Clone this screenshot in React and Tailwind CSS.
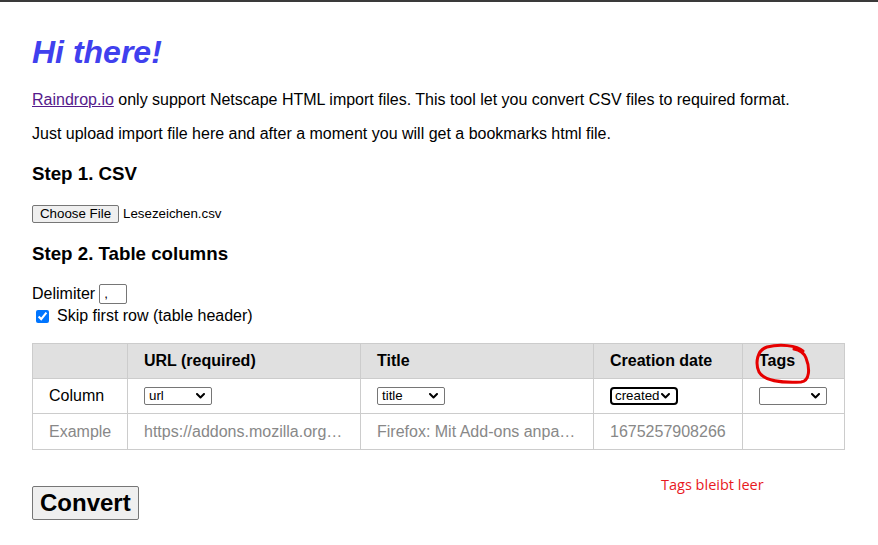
import React from "react";

function Chevron() {
  return (
    <svg width="9" height="6" viewBox="0 0 9 6" className="absolute right-[6px] top-1/2 -translate-y-1/2 pointer-events-none">
      <polyline points="1,1 4.5,4.5 8,1" fill="none" stroke="#000" strokeWidth="2" strokeLinecap="round" strokeLinejoin="round" />
    </svg>
  );
}

function Select({ value, focused }) {
  return (
    <div
      className={
        focused
          ? "relative w-[68px] h-[18px] border-2 border-black rounded-[4px] bg-white flex items-center"
          : "relative w-[68px] h-[18px] border border-[#767676] rounded-[2px] bg-white flex items-center"
      }
    >
      <span className={focused ? "text-[13.33px] leading-[14px] pl-[3px] text-black" : "text-[13.33px] leading-[14px] pl-[4px] text-black"}>{value}</span>
      <Chevron />
    </div>
  );
}

export default function App() {
  return (
    <div className="relative min-h-[545px] bg-white text-black" style={{ fontFamily: '"Liberation Sans", Arial, sans-serif' }}>
      <div className="h-[2px] bg-[#3a3a3a]" />
      <main className="px-[32px]">
        <h1 className="mt-[32px] text-[32px] leading-[36px] italic font-bold text-[#4040ee]">Hi there!</h1>
        <p className="mt-[21px] text-[16px] leading-[18px]">
          <a className="underline text-[#551a8b]">Raindrop.io</a> only support Netscape HTML import files. This tool let you convert CSV files to required format.
        </p>
        <p className="mt-[16px] text-[16px] leading-[18px]">Just upload import file here and after a moment you will get a bookmarks html file.</p>
        <h3 className="mt-[20px] text-[18.72px] leading-[21px] font-bold">Step 1. CSV</h3>
        <div className="mt-[21px] flex items-center h-[18px]">
          <div className="w-[87px] h-[18px] border border-[#767676] rounded-[2px] bg-[#efefef] flex items-center justify-center text-[13.33px] leading-[14px]">Choose File</div>
          <span className="ml-[4px] text-[13.33px] leading-[14px]">Lesezeichen.csv</span>
        </div>
        <h3 className="mt-[20px] text-[18.72px] leading-[21px] font-bold">Step 2. Table columns</h3>
        <div className="mt-[20px] flex items-center h-[20px] text-[16px]">
          <span className="leading-[18px]">Delimiter</span>
          <div className="ml-[4px] w-[28px] h-[20px] border border-[#767676] rounded-[2px] flex items-center pl-[4px] text-[13.33px] leading-[14px]">,</div>
        </div>
        <div className="mt-[3px] flex items-center h-[18px] text-[16px]">
          <input type="checkbox" defaultChecked className="w-[13px] h-[13px] ml-[4px] mr-[8px] accent-[#0075ff]" />
          <span className="leading-[18px]">Skip first row (table header)</span>
        </div>
        <table className="mt-[18px] border-collapse table-fixed w-[812px] text-[16px]">
          <colgroup>
            <col className="w-[95px]" />
            <col className="w-[233px]" />
            <col className="w-[233px]" />
            <col className="w-[149px]" />
            <col className="w-[102px]" />
          </colgroup>
          <thead>
            <tr className="bg-[#e0e0e0] h-[35px]">
              <th className="border border-[#cccccc] px-[16px] text-left font-bold"></th>
              <th className="border border-[#cccccc] px-[16px] text-left font-bold">URL (required)</th>
              <th className="border border-[#cccccc] px-[16px] text-left font-bold">Title</th>
              <th className="border border-[#cccccc] px-[16px] text-left font-bold">Creation date</th>
              <th className="relative border border-[#cccccc] px-[16px] text-left font-bold">
                Tags
                <svg width="103" height="42" viewBox="0 0 103 42" className="absolute left-0 top-0 overflow-visible pointer-events-none">
                  <path
                    d="M 60 7 C 54 1, 36 0, 24 3 C 14 6, 12 19, 16 28 C 21 37, 40 39, 58 38 C 67 37, 67 24, 63 14 C 61 9, 57 6, 51 5"
                    fill="none"
                    stroke="#e60000"
                    strokeWidth="3"
                    strokeLinecap="round"
                    strokeLinejoin="round"
                  />
                </svg>
              </th>
            </tr>
          </thead>
          <tbody>
            <tr className="h-[35px]">
              <td className="border border-[#cccccc] px-[16px]">Column</td>
              <td className="border border-[#cccccc] px-[16px]"><Select value="url" /></td>
              <td className="border border-[#cccccc] px-[16px]"><Select value="title" /></td>
              <td className="border border-[#cccccc] px-[16px]"><Select value="created" focused /></td>
              <td className="border border-[#cccccc] px-[16px]"><Select value="" /></td>
            </tr>
            <tr className="h-[36px] text-[#888888]">
              <td className="border border-[#cccccc] px-[16px]">Example</td>
              <td className="border border-[#cccccc] px-[16px] whitespace-nowrap overflow-hidden text-ellipsis">https://addons.mozilla.org/de/firefox/</td>
              <td className="border border-[#cccccc] px-[16px] whitespace-nowrap overflow-hidden text-ellipsis">Firefox: Mit Add-ons anpassen</td>
              <td className="border border-[#cccccc] px-[16px]">1675257908266</td>
              <td className="border border-[#cccccc] px-[16px]"></td>
            </tr>
          </tbody>
        </table>
        <button className="mt-[36px] h-[34px] px-[7px] border border-[#767676] rounded-[2px] bg-[#efefef] text-[24px] leading-[28px] font-bold">Convert</button>
      </main>
      <div className="absolute left-[661px] top-[475px] text-[14.5px] leading-[20px] text-[#e8191e]" style={{ fontFamily: '"Open Sans", sans-serif' }}>
        Tags bleibt leer
      </div>
    </div>
  );
}
